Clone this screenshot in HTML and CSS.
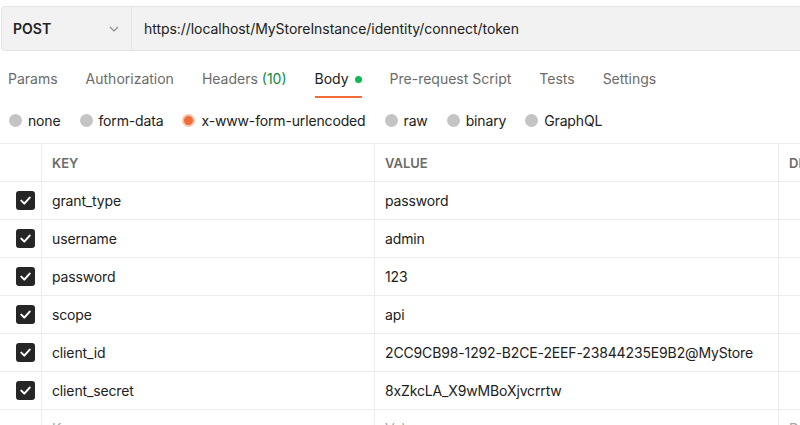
FILE: index.html
```html
<!DOCTYPE html>
<html>
<head>
<meta charset="utf-8">
<link rel="stylesheet" href="styles.css">
</head>
<body>
<div class="urlbar">
  <div class="method">
    <span class="method-name">POST</span>
    <svg class="chev" width="10" height="6" viewBox="0 0 10 6"><path d="M1 1l4 4 4-4" fill="none" stroke="#8a8a8a" stroke-width="1.2"/></svg>
  </div>
  <div class="url">https://localhost/MyStoreInstance/identity/connect/token</div>
</div>
<div class="tabs">
  <div class="tab">Params</div>
  <div class="tab">Authorization</div>
  <div class="tab">Headers <span class="count">(10)</span></div>
  <div class="tab active">Body <span class="dot"></span></div>
  <div class="tab">Pre-request Script</div>
  <div class="tab">Tests</div>
  <div class="tab">Settings</div>
</div>
<div class="radios">
  <div class="radio"><span class="circle"></span>none</div>
  <div class="radio"><span class="circle"></span>form-data</div>
  <div class="radio"><span class="circle on"></span>x-www-form-urlencoded</div>
  <div class="radio"><span class="circle"></span>raw</div>
  <div class="radio"><span class="circle"></span>binary</div>
  <div class="radio"><span class="circle"></span>GraphQL</div>
</div>
<div class="table">
  <div class="row head">
    <div class="cell c0"></div>
    <div class="cell c1">KEY</div>
    <div class="cell c2">VALUE</div>
    <div class="cell c3">DESCRIPTION</div>
  </div>
  <div class="row">
    <div class="cell c0"><span class="cb"><svg width="11" height="9" viewBox="0 0 11 9"><path d="M1.3 4.6l3 3 5.4-6" fill="none" stroke="#fff" stroke-width="2" stroke-linecap="round" stroke-linejoin="round"/></svg></span></div>
    <div class="cell c1">grant_type</div>
    <div class="cell c2">password</div>
    <div class="cell c3"></div>
  </div>
  <div class="row">
    <div class="cell c0"><span class="cb"><svg width="11" height="9" viewBox="0 0 11 9"><path d="M1.3 4.6l3 3 5.4-6" fill="none" stroke="#fff" stroke-width="2" stroke-linecap="round" stroke-linejoin="round"/></svg></span></div>
    <div class="cell c1">username</div>
    <div class="cell c2">admin</div>
    <div class="cell c3"></div>
  </div>
  <div class="row">
    <div class="cell c0"><span class="cb"><svg width="11" height="9" viewBox="0 0 11 9"><path d="M1.3 4.6l3 3 5.4-6" fill="none" stroke="#fff" stroke-width="2" stroke-linecap="round" stroke-linejoin="round"/></svg></span></div>
    <div class="cell c1">password</div>
    <div class="cell c2">123</div>
    <div class="cell c3"></div>
  </div>
  <div class="row">
    <div class="cell c0"><span class="cb"><svg width="11" height="9" viewBox="0 0 11 9"><path d="M1.3 4.6l3 3 5.4-6" fill="none" stroke="#fff" stroke-width="2" stroke-linecap="round" stroke-linejoin="round"/></svg></span></div>
    <div class="cell c1">scope</div>
    <div class="cell c2">api</div>
    <div class="cell c3"></div>
  </div>
  <div class="row">
    <div class="cell c0"><span class="cb"><svg width="11" height="9" viewBox="0 0 11 9"><path d="M1.3 4.6l3 3 5.4-6" fill="none" stroke="#fff" stroke-width="2" stroke-linecap="round" stroke-linejoin="round"/></svg></span></div>
    <div class="cell c1">client_id</div>
    <div class="cell c2">2CC9CB98-1292-B2CE-2EEF-23844235E9B2@MyStore</div>
    <div class="cell c3"></div>
  </div>
  <div class="row">
    <div class="cell c0"><span class="cb"><svg width="11" height="9" viewBox="0 0 11 9"><path d="M1.3 4.6l3 3 5.4-6" fill="none" stroke="#fff" stroke-width="2" stroke-linecap="round" stroke-linejoin="round"/></svg></span></div>
    <div class="cell c1">client_secret</div>
    <div class="cell c2">8xZkcLA_X9wMBoXjvcrrtw</div>
    <div class="cell c3"></div>
  </div>
  <div class="row">
    <div class="cell c0"></div>
    <div class="cell c1 ph">Key</div>
    <div class="cell c2 ph">Value</div>
    <div class="cell c3 ph">Description</div>
  </div>
</div>
</body>
</html>
```
FILE: styles.css
```css
html, body {
  margin: 0;
  padding: 0;
  background: #fff;
  overflow: hidden;
}
body {
  font-family: Inter, "Noto Sans", sans-serif;
  font-size: 14px;
  color: #212121;
  width: 800px;
  height: 425px;
}
.urlbar {
  margin-top: 6px;
  margin-left: 1px;
  height: 43px;
  width: 820px;
  background: #f2f2f2;
  border: 1px solid #e4e4e4;
  border-right: none;
  border-radius: 4px 0 0 4px;
  display: flex;
  align-items: stretch;
}
.method {
  width: 130px;
  box-sizing: border-box;
  border-right: 1px solid #e4e4e4;
  display: flex;
  align-items: center;
  justify-content: space-between;
  padding-left: 11px;
  padding-right: 12px;
}
.method-name {
  font-weight: 600;
  color: #212121;
}
.chev { display: block; }
.url {
  display: flex;
  align-items: center;
  padding-left: 12px;
  color: #212121;
  letter-spacing: -0.05px;
}
.tabs {
  display: flex;
  margin-top: 11px;
  padding-left: 8px;
  gap: 28px;
}
.tab {
  padding-top: 8px;
  padding-bottom: 8px;
  line-height: 18px;
  color: #6b6b6b;
  border-bottom: 2px solid transparent;
  display: flex;
  align-items: center;
  white-space: pre;
}
.tab.active {
  color: #212121;
  border-bottom-color: #f26b3a;
}
.count { color: #0b8a3d; }
.dot {
  display: inline-block;
  width: 7px;
  height: 7px;
  border-radius: 50%;
  background: #0cbb52;
  margin-left: 2px;
}
.radios {
  display: flex;
  margin-top: 10px;
  padding-left: 9px;
  height: 24px;
  align-items: center;
  gap: 19px;
  letter-spacing: -0.15px;
}
.radio {
  display: flex;
  align-items: center;
  color: #212121;
}
.circle {
  width: 13px;
  height: 13px;
  border-radius: 50%;
  background: #c4c4c4;
  margin-right: 6px;
  box-sizing: border-box;
}
.circle.on {
  background: #f06c39;
  border: 2px solid #f6c2ad;
}
.table {
  margin-top: 11px;
  border-top: 1px solid #ececec;
  width: 900px;
}
.row {
  display: grid;
  grid-template-columns: 41px 333px 404px 122px;
  height: 38px;
  border-bottom: 1px solid #ececec;
  box-sizing: border-box;
  letter-spacing: -0.14px;
}
.cell {
  display: flex;
  align-items: center;
  padding-left: 10px;
  border-left: 1px solid #ececec;
  white-space: nowrap;
  overflow: hidden;
}
.c0 {
  border-left: none;
  padding-left: 16px;
}
.head .cell {
  font-size: 13px;
  font-weight: 600;
  color: #6b6b6b;
  letter-spacing: 0;
}
.cb {
  width: 19px;
  height: 19px;
  border-radius: 3px;
  background: #262626;
  display: flex;
  align-items: center;
  justify-content: center;
}
.cb svg { display: block; }
.ph { color: #a6a6a6; }
```
